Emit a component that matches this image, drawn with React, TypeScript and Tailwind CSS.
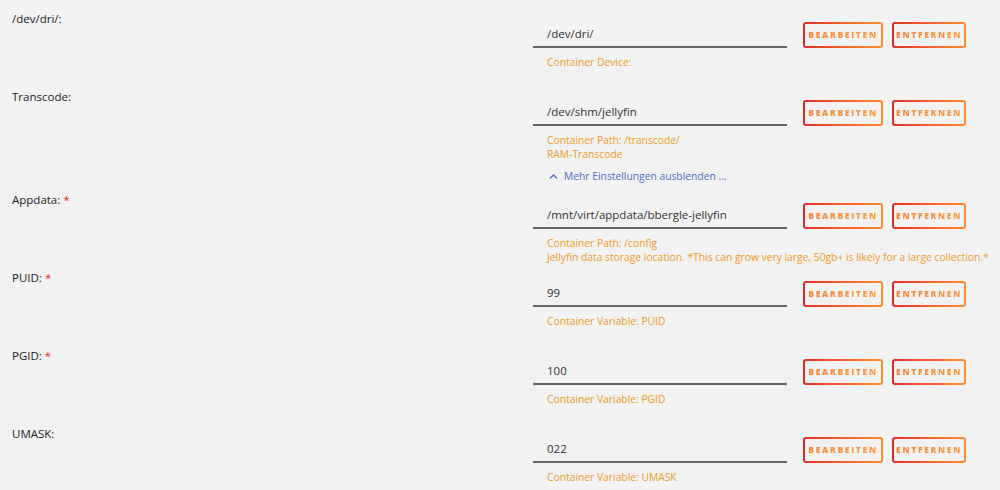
import { FaChevronUp } from "react-icons/fa";

type Row = {
  label: string;
  required?: boolean;
  value: string;
  hints: string[];
};

const rows: Row[] = [
  { label: "/dev/dri/:", value: "/dev/dri/", hints: ["Container Device:"] },
  { label: "Transcode:", value: "/dev/shm/jellyfin", hints: ["Container Path: /transcode/", "RAM-Transcode"] },
  {
    label: "Appdata:",
    required: true,
    value: "/mnt/virt/appdata/bbergle-jellyfin",
    hints: [
      "Container Path: /config",
      "Jellyfin data storage location. *This can grow very large, 50gb+ is likely for a large collection.*",
    ],
  },
  { label: "PUID:", required: true, value: "99", hints: ["Container Variable: PUID"] },
  { label: "PGID:", required: true, value: "100", hints: ["Container Variable: PGID"] },
  { label: "UMASK:", value: "022", hints: ["Container Variable: UMASK"] },
];

function GradientButton({ text, width }: { text: string; width: string }) {
  return (
    <button className={`rounded-[3px] bg-gradient-to-r from-[#e22828] to-[#ff8c2f] p-[2px] ${width}`}>
      <span className="flex h-[22px] items-center justify-center rounded-[1px] bg-[#f2f2f2]">
        <span className="bg-gradient-to-r from-[#f5843a] to-[#ff9a3c] bg-clip-text text-[8.5px] font-extrabold tracking-[1.7px] text-transparent">
          {text}
        </span>
      </span>
    </button>
  );
}

function SettingRow({ row }: { row: Row }) {
  return (
    <div className="flex pb-[3px]">
      <div className="w-[533px] shrink-0 pl-3 text-[11.5px] leading-[22px] text-[#222]">
        {row.label}
        {row.required && <span className="ml-[3px] text-[#e22828]">*</span>}
      </div>
      <div className="flex flex-col pt-[14px]">
        <div className="flex items-center">
          <div className="flex h-[26px] w-[254px] items-center border-b-2 border-[#666] px-[14px] text-[11.5px] text-[#333]">
            {row.value}
          </div>
          <div className="ml-4 flex gap-[9px]">
            <GradientButton text="BEARBEITEN" width="w-[80px]" />
            <GradientButton text="ENTFERNEN" width="w-[74px]" />
          </div>
        </div>
        <div className="mt-[7px] min-h-[28px] whitespace-nowrap pl-[14px] text-[10.3px] leading-[14px] text-[#f09a22]">
          {row.hints.map((h) => (
            <div key={h}>{h}</div>
          ))}
        </div>
      </div>
    </div>
  );
}

export default function App() {
  return (
    <div className="min-h-[490px] w-[1000px] overflow-hidden bg-[#f2f2f2] pt-2 font-['Open_Sans',sans-serif]">
      {rows.slice(0, 2).map((r) => (
        <SettingRow key={r.label} row={r} />
      ))}
      <div className="flex h-[25px] items-center pl-[549px] text-[10.3px] text-[#4a6fc9]">
        <FaChevronUp size="9px" className="mr-[6px]" />
        <span>Mehr Einstellungen ausblenden ...</span>
      </div>
      {rows.slice(2).map((r) => (
        <SettingRow key={r.label} row={r} />
      ))}
    </div>
  );
}
